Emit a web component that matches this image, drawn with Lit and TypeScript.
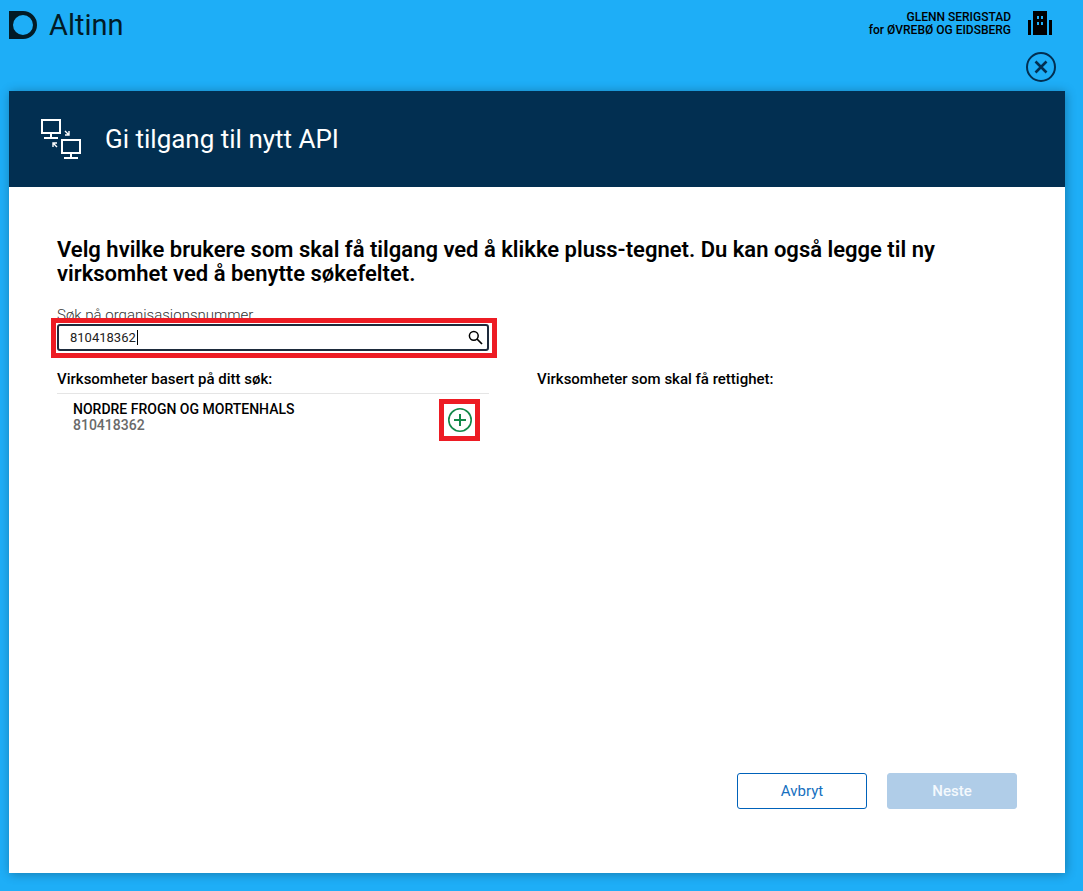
import { LitElement, html, css } from "lit";
import { customElement, state } from "lit/decorators.js";

@customElement("app-root")
export class AppRoot extends LitElement {
  static styles = css`
    :host {
      display: flex;
      flex-direction: column;
      box-sizing: border-box;
      min-height: 100vh;
      padding: 0 18px 18px 9px;
      background: #1eaef7;
      color: #000;
      font-family: Roboto, "Liberation Sans", sans-serif;
      font-size: 15px;
      line-height: 16px;
    }
    * {
      box-sizing: border-box;
    }
    svg {
      display: block;
    }
    h1,
    h2,
    h3,
    p,
    ul {
      margin: 0;
      padding: 0;
      font-weight: 500;
    }
    button {
      font: inherit;
      cursor: pointer;
    }
    .topbar {
      display: flex;
      justify-content: space-between;
      align-items: flex-start;
      padding: 11px 13px 0 0;
    }
    .brand {
      display: flex;
      align-items: center;
      gap: 12px;
      color: #021b26;
      text-decoration: none;
      font-size: 29px;
      line-height: 28px;
    }
    .user {
      display: flex;
      gap: 17px;
      text-align: right;
      font-size: 12px;
      line-height: 13px;
      font-weight: 500;
    }
    .close-row {
      display: flex;
      justify-content: flex-end;
      padding: 13px 9px 9px 0;
    }
    .icon-button {
      display: block;
      padding: 0;
      border: 0;
      background: none;
    }
    .panel {
      flex: 1;
      display: flex;
      flex-direction: column;
      background: #fff;
      box-shadow: 1px 1px 10px rgba(0, 0, 0, 0.3);
    }
    .panel-head {
      display: flex;
      align-items: center;
      gap: 24px;
      height: 96px;
      padding: 0 32px;
      background: #022f51;
      color: #fff;
    }
    .panel-head h1 {
      font-size: 26px;
      line-height: 32px;
      font-weight: 400;
    }
    .content {
      flex: 1;
      display: flex;
      flex-direction: column;
      padding: 51px 48px 64px;
    }
    .lead {
      font-size: 22px;
      line-height: 24px;
      font-weight: 600;
    }
    .columns {
      display: grid;
      grid-template-columns: 1fr 1fr;
      gap: 48px;
      padding: 20px 48px 0 0;
    }
    .column {
      display: flex;
      flex-direction: column;
    }
    .column-right {
      padding-top: 65px;
    }
    .label {
      color: #333;
      font-weight: 300;
      line-height: 18px;
    }
    .search {
      position: relative;
      height: 27px;
    }
    .search input {
      display: block;
      width: 100%;
      height: 27px;
      padding: 0 32px 0 11px;
      border: 2px solid #1e2b3c;
      border-radius: 3px;
      outline: 0;
      background: #fff;
      color: #222;
      font: 13px/20px Roboto, "Liberation Sans", sans-serif;
      caret-color: transparent;
    }
    .search svg {
      position: absolute;
      top: 6px;
      right: 6px;
    }
    .caret {
      position: absolute;
      top: 6px;
      left: 80px;
      width: 1px;
      height: 15px;
      background: #000;
    }
    .mark {
      position: absolute;
      border: 5px solid #ed1c24;
      pointer-events: none;
    }
    .mark-search {
      inset: -6px -8px -7px -6px;
    }
    .mark-add {
      inset: -9px -8px -9px -9px;
    }
    h3 {
      font-size: 15px;
      line-height: 16px;
    }
    .results-title {
      padding: 20px 0 6px;
      border-bottom: 1px solid #e5e5e5;
    }
    .row {
      display: flex;
      justify-content: space-between;
      align-items: flex-start;
      padding: 7px 17px 7px 16px;
      list-style: none;
      font-size: 14px;
    }
    .number {
      color: #6a6a6a;
    }
    .add {
      position: relative;
      margin-top: 7px;
    }
    .actions {
      display: flex;
      justify-content: flex-end;
      gap: 20px;
      margin-top: auto;
    }
    .button {
      width: 130px;
      height: 36px;
      border: 1px solid #0062ba;
      border-radius: 3px;
      background: #fff;
      color: #1670c0;
    }
    .button-primary {
      border-color: #b0cde8;
      background: #b0cde8;
      color: #f4f9fd;
      font-weight: 500;
    }
  `;

  @state() private query = "810418362";
  private results = [{ name: "NORDRE FROGN OG MORTENHALS", number: "810418362" }];

  render() {
    return html`
      <header class="topbar">
        <a class="brand" href="#">
          <svg width="28" height="28" viewBox="0 0 28 28" aria-hidden="true">
            <path fill="#021b26" fill-rule="evenodd" d="M0 0h14a14 14 0 0 1 0 28H0zM14 4a10 10 0 1 0 0 20a10 10 0 0 0 0-20z" />
          </svg>
          <span>Altinn</span>
        </a>
        <div class="user">
          <div>
            <div>GLENN SERIGSTAD</div>
            <div>for ØVREBØ OG EIDSBERG</div>
          </div>
          <svg width="24" height="24" viewBox="0 0 24 24" aria-hidden="true">
            <path fill-rule="evenodd" d="M5 0h14v24H5zM9 5v3h2V5zM13 5v3h2V5zM9 11v3h2v-3zM13 11v3h2v-3zM0 9h3v15H0zM21 9h3v15h-3z" />
          </svg>
        </div>
      </header>
      <div class="close-row">
        <button class="icon-button" aria-label="Lukk">
          <svg width="30" height="30" viewBox="0 0 30 30" fill="none" stroke="#022f51">
            <circle cx="15" cy="15" r="14" stroke-width="2" />
            <path d="M9.500 9.500l11 11M20.500 9.500l-11 11" stroke-width="2.600" />
          </svg>
        </button>
      </div>
      <main class="panel">
        <div class="panel-head">
          <svg width="40" height="40" viewBox="0 0 40 40" fill="none" stroke="#fff" stroke-width="2" aria-hidden="true">
            <path d="M1 1h18v13H1zM21 21h18v13H21z" />
            <path d="M10 14v4M30 34v4" />
            <path d="M3 19h14M23 39h14" />
            <path d="M24 12l3.500 3.500M28 12v4h-4M16 28l-3.500-3.500M12 28v-4h4" stroke-width="1.400" />
          </svg>
          <h1>Gi tilgang til nytt API</h1>
        </div>
        <div class="content">
          <h2 class="lead">
            Velg hvilke brukere som skal få tilgang ved å klikke pluss-tegnet. Du kan også legge til ny
            virksomhet ved å benytte søkefeltet.
          </h2>
          <div class="columns">
            <section class="column">
              <label class="label" for="search">Søk på organisasjonsnummer</label>
              <div class="search">
                <input
                  id="search"
                  type="text"
                  .value=${this.query}
                  @input=${(e: InputEvent) => (this.query = (e.target as HTMLInputElement).value)}
                />
                <span class="caret"></span>
                <svg width="15" height="15" viewBox="0 0 15 15" fill="none" stroke="#000" aria-hidden="true">
                  <circle cx="5.800" cy="5.800" r="4.400" stroke-width="1.500" />
                  <path d="M9 9l5 5" stroke-width="1.700" />
                </svg>
                <span class="mark mark-search"></span>
              </div>
              <h3 class="results-title">Virksomheter basert på ditt søk:</h3>
              <ul>
                ${this.results.map(
                  (org) => html`
                    <li class="row">
                      <div>
                        <p>${org.name}</p>
                        <p class="number">${org.number}</p>
                      </div>
                      <div class="add">
                        <button class="icon-button" aria-label="Legg til ${org.name}">
                          <svg width="24" height="24" viewBox="0 0 24 24" fill="none" stroke="#118849">
                            <circle cx="12" cy="12" r="11.200" stroke-width="1.600" />
                            <path d="M12 6v12M6 12h12" stroke-width="2" />
                          </svg>
                        </button>
                        <span class="mark mark-add"></span>
                      </div>
                    </li>
                  `,
                )}
              </ul>
            </section>
            <section class="column column-right">
              <h3>Virksomheter som skal få rettighet:</h3>
            </section>
          </div>
          <div class="actions">
            <button class="button">Avbryt</button>
            <button class="button button-primary" disabled>Neste</button>
          </div>
        </div>
      </main>
    `;
  }
}
